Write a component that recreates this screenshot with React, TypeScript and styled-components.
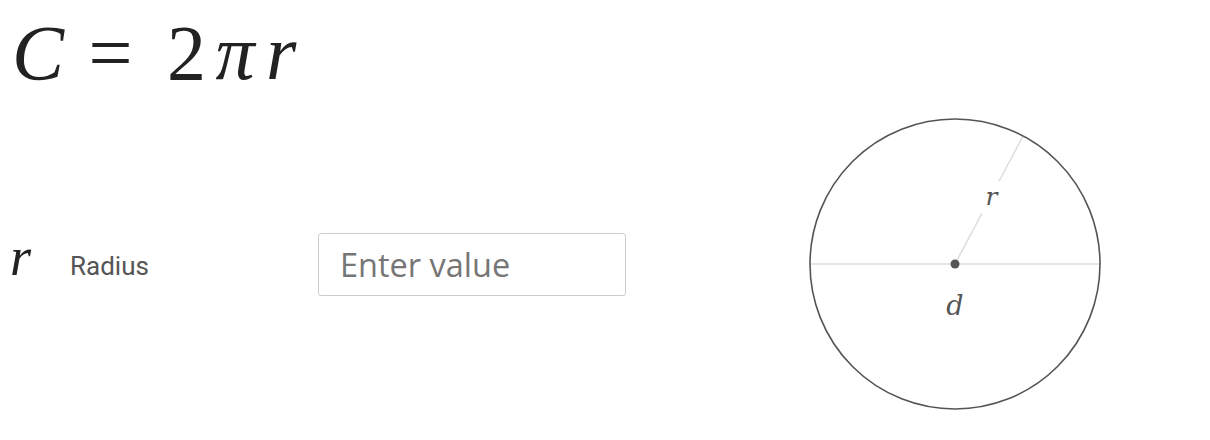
import React from 'react';
import styled, { createGlobalStyle } from 'styled-components';

const GlobalStyle = createGlobalStyle`
  html, body {
    margin: 0;
    padding: 0;
    background: #ffffff;
  }
`;

const Page = styled.div`
  padding: 14px 10px 0 12px;
  width: 1210px;
  box-sizing: border-box;
`;

const Formula = styled.div`
  font-family: 'Liberation Serif', 'Times New Roman', serif;
  font-style: italic;
  font-size: 78px;
  line-height: 78px;
  height: 78px;
  color: #222222;
  margin-bottom: 22px;
  white-space: pre;
`;

const Term = styled.span<{ $upright?: boolean; $shift?: number }>`
  font-style: ${(p) => (p.$upright ? 'normal' : 'italic')};
  margin-left: ${(p) => p.$shift ?? 0}px;
`;

const Row = styled.div`
  display: flex;
  align-items: center;
  margin-left: -2px;
`;

const VarGroup = styled.div`
  display: flex;
  align-items: baseline;
  width: 308px;
  padding-bottom: 14px;
`;

const VarSymbol = styled.div`
  width: 60px;
  font-family: 'Liberation Serif', 'Times New Roman', serif;
  font-style: italic;
  font-size: 54px;
  line-height: 1;
  color: #222222;
`;

const Label = styled.div`
  font-family: Roboto, 'Liberation Sans', sans-serif;
  font-size: 26px;
  color: #555555;
`;

const ValueInput = styled.input`
  width: 308px;
  height: 63px;
  box-sizing: border-box;
  border: 1.5px solid #cccccc;
  border-radius: 3px;
  padding: 0 0 0 21px;
  font-family: 'Open Sans', 'Noto Sans', sans-serif;
  font-size: 32.5px;
  color: #333333;
  outline: none;

  &::placeholder {
    color: #767676;
  }
`;

const Diagram = styled.svg`
  margin-left: 179px;
  flex-shrink: 0;
  display: block;
`;

const CircleDiagram: React.FC = () => {
  const cx = 150;
  const cy = 150;
  const R = 145;
  const angle = (62 * Math.PI) / 180;
  const ex = cx + R * Math.cos(angle);
  const ey = cy - R * Math.sin(angle);
  const labelT = 0.52;
  const lx = cx + (ex - cx) * labelT;
  const ly = cy + (ey - cy) * labelT;

  return (
    <Diagram width={300} height={300} viewBox="0 0 300 300">
      <line x1={cx - R} y1={cy} x2={cx + R} y2={cy} stroke="#dddddd" strokeWidth={1.5} />
      <line x1={cx} y1={cy} x2={ex} y2={ey} stroke="#dddddd" strokeWidth={1.5} />
      <rect x={lx - 12} y={ly - 16} width={24} height={32} fill="#ffffff" />
      <circle cx={cx} cy={cy} r={R} fill="none" stroke="#555555" strokeWidth={1.6} />
      <circle cx={cx} cy={cy} r={4.5} fill="#555555" />
      <text
        x={lx + 1}
        y={ly + 8}
        textAnchor="middle"
        fontFamily="'DejaVu Serif', serif"
        fontStyle="italic"
        fontSize={25}
        fill="#555555"
      >
        r
      </text>
      <text
        x={cx}
        y={cy + 51}
        textAnchor="middle"
        fontFamily="'DejaVu Serif', serif"
        fontStyle="italic"
        fontSize={27}
        fill="#555555"
      >
        d
      </text>
    </Diagram>
  );
};

const App: React.FC = () => {
  return (
    <>
      <GlobalStyle />
      <Page>
        <Formula>
          C <Term $upright $shift={5}>=</Term> <Term $upright $shift={15}>2</Term>{' '}
          <Term $shift={-10}>π</Term> <Term $shift={-8}>r</Term>
        </Formula>
        <Row>
          <VarGroup>
            <VarSymbol>r</VarSymbol>
            <Label>Radius</Label>
          </VarGroup>
          <ValueInput type="text" placeholder="Enter value" />
          <CircleDiagram />
        </Row>
      </Page>
    </>
  );
};

export default App;
